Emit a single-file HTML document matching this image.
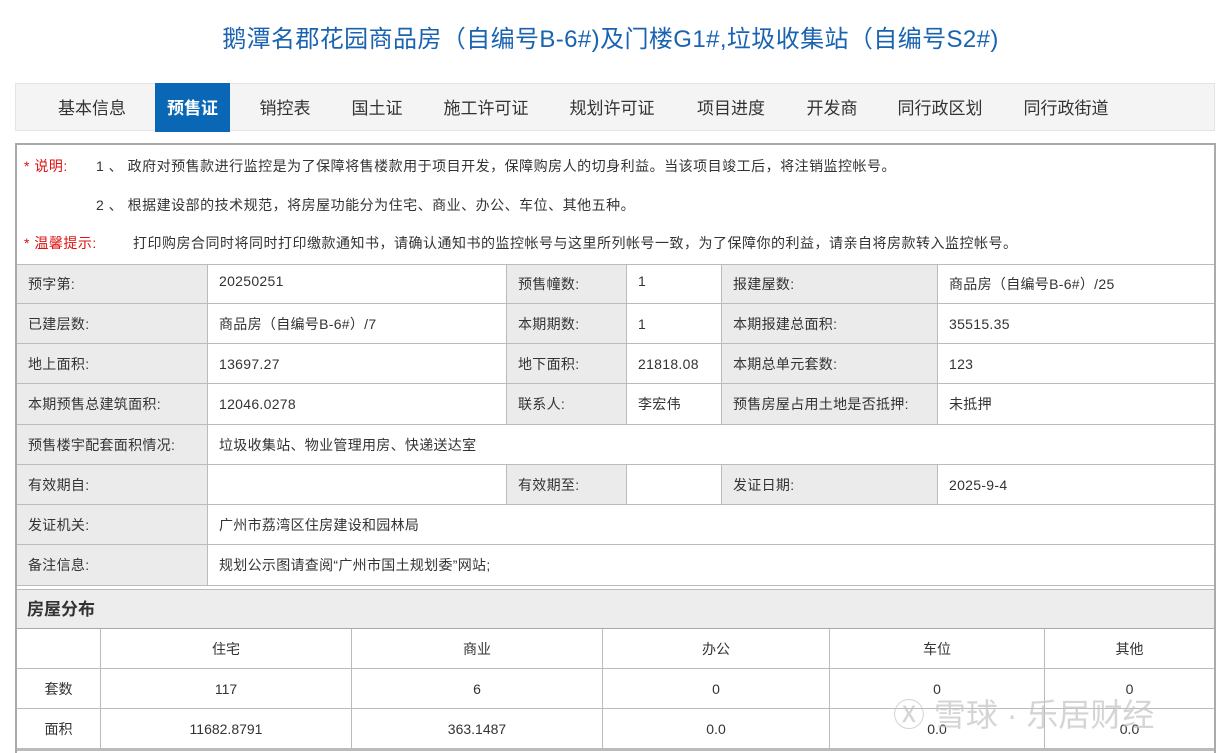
<!DOCTYPE html>
<html><head><meta charset="utf-8"><style>
body{margin:0;width:1221px;height:753px;background:#fff;font-family:"Liberation Sans","Noto Sans CJK SC",sans-serif;position:relative;overflow:hidden;color:#333}
.a{position:absolute;box-sizing:border-box}
.t{font-size:24px;color:#1a63b0;left:0;width:1221px;text-align:center;top:19px;letter-spacing:0.4px}
.nav{left:15px;top:83px;width:1200px;height:48px;background:#f4f4f4;border:1px solid #e4e4e4}
.tab{top:85px;height:48px;line-height:48px;font-size:17px;color:#333;transform:translateX(-50%);white-space:nowrap}
.act{left:155px;top:83px;width:75px;height:49px;background:#0a67b5;color:#fff;font-weight:bold;font-size:17px;text-align:center;line-height:51px}
.box{left:15px;top:143px;width:1201px;height:610px;border:2px solid #aaa;border-bottom:none}
.n{font-size:14px;color:#333;white-space:nowrap;letter-spacing:0.5px}
.r{color:#d11}
.c{font-size:14px;color:#333;padding-left:11px;display:flex;align-items:center;border-right:1px solid #bbb;border-bottom:1px solid #bbb;letter-spacing:0.3px}
.l{background:#ebebeb}
.h{font-size:14px;color:#333;display:flex;align-items:center;justify-content:center;border-right:1px solid #bbb;border-bottom:1px solid #bbb}
</style></head><body>
<div class="a t">鹅潭名郡花园商品房（自编号B-6#)及门楼G1#,垃圾收集站（自编号S2#)</div>
<div class="a nav"></div>
<div class="a tab" style="left:92px">基本信息</div>
<div class="a act">预售证</div>
<div class="a tab" style="left:285px">销控表</div>
<div class="a tab" style="left:377px">国土证</div>
<div class="a tab" style="left:486px">施工许可证</div>
<div class="a tab" style="left:612px">规划许可证</div>
<div class="a tab" style="left:731px">项目进度</div>
<div class="a tab" style="left:832px">开发商</div>
<div class="a tab" style="left:940px">同行政区划</div>
<div class="a tab" style="left:1066px">同行政街道</div>
<div class="a box"></div>
<div class="a n" style="left:24px;top:156px"><span class="r">* 说明:</span></div>
<div class="a n" style="left:96px;top:156px">1 、 政府对预售款进行监控是为了保障将售楼款用于项目开发，保障购房人的切身利益。当该项目竣工后，将注销监控帐号。</div>
<div class="a n" style="left:96px;top:195px">2 、 根据建设部的技术规范，将房屋功能分为住宅、商业、办公、车位、其他五种。</div>
<div class="a n" style="left:24px;top:233px"><span class="r">* 温馨提示:</span></div>
<div class="a n" style="left:133px;top:233px">打印购房合同时将同时打印缴款通知书，请确认通知书的监控帐号与这里所列帐号一致，为了保障你的利益，请亲自将房款转入监控帐号。</div>
<div class="a" style="left:17px;top:264px;width:1197px;border-top:1px solid #bbb"></div>

<div class="a c l" style="left:17px;top:265px;width:191px;height:39px">预字第:</div>
<div class="a c" style="left:208px;top:265px;width:299px;height:39px;align-items:flex-start;padding-top:8px">20250251</div>
<div class="a c l" style="left:507px;top:265px;width:120px;height:39px">预售幢数:</div>
<div class="a c" style="left:627px;top:265px;width:95px;height:39px;align-items:flex-start;padding-top:8px">1</div>
<div class="a c l" style="left:722px;top:265px;width:216px;height:39px">报建屋数:</div>
<div class="a c" style="left:938px;top:265px;width:276px;height:39px;border-right:none">商品房（自编号B-6#）/25</div>

<div class="a c l" style="left:17px;top:304px;width:191px;height:40px">已建层数:</div>
<div class="a c" style="left:208px;top:304px;width:299px;height:40px">商品房（自编号B-6#）/7</div>
<div class="a c l" style="left:507px;top:304px;width:120px;height:40px">本期期数:</div>
<div class="a c" style="left:627px;top:304px;width:95px;height:40px">1</div>
<div class="a c l" style="left:722px;top:304px;width:216px;height:40px">本期报建总面积:</div>
<div class="a c" style="left:938px;top:304px;width:276px;height:40px;border-right:none">35515.35</div>

<div class="a c l" style="left:17px;top:344px;width:191px;height:40px">地上面积:</div>
<div class="a c" style="left:208px;top:344px;width:299px;height:40px">13697.27</div>
<div class="a c l" style="left:507px;top:344px;width:120px;height:40px">地下面积:</div>
<div class="a c" style="left:627px;top:344px;width:95px;height:40px">21818.08</div>
<div class="a c l" style="left:722px;top:344px;width:216px;height:40px">本期总单元套数:</div>
<div class="a c" style="left:938px;top:344px;width:276px;height:40px;border-right:none">123</div>

<div class="a c l" style="left:17px;top:384px;width:191px;height:41px">本期预售总建筑面积:</div>
<div class="a c" style="left:208px;top:384px;width:299px;height:41px">12046.0278</div>
<div class="a c l" style="left:507px;top:384px;width:120px;height:41px">联系人:</div>
<div class="a c" style="left:627px;top:384px;width:95px;height:41px">李宏伟</div>
<div class="a c l" style="left:722px;top:384px;width:216px;height:41px">预售房屋占用土地是否抵押:</div>
<div class="a c" style="left:938px;top:384px;width:276px;height:41px;border-right:none">未抵押</div>

<div class="a c l" style="left:17px;top:425px;width:191px;height:40px">预售楼宇配套面积情况:</div>
<div class="a c" style="left:208px;top:425px;width:1006px;height:40px;border-right:none">垃圾收集站、物业管理用房、快递送达室</div>

<div class="a c l" style="left:17px;top:465px;width:191px;height:40px">有效期自:</div>
<div class="a c" style="left:208px;top:465px;width:299px;height:40px"></div>
<div class="a c l" style="left:507px;top:465px;width:120px;height:40px">有效期至:</div>
<div class="a c" style="left:627px;top:465px;width:95px;height:40px"></div>
<div class="a c l" style="left:722px;top:465px;width:216px;height:40px">发证日期:</div>
<div class="a c" style="left:938px;top:465px;width:276px;height:40px;border-right:none">2025-9-4</div>

<div class="a c l" style="left:17px;top:505px;width:191px;height:40px">发证机关:</div>
<div class="a c" style="left:208px;top:505px;width:1006px;height:40px;border-right:none">广州市荔湾区住房建设和园林局</div>

<div class="a c l" style="left:17px;top:545px;width:191px;height:41px">备注信息:</div>
<div class="a c" style="left:208px;top:545px;width:1006px;height:41px;border-right:none">规划公示图请查阅“广州市国土规划委”网站;</div>

<div class="a" style="left:17px;top:586px;width:1197px;height:4px;background:#fff;border-bottom:1px solid #bbb"></div>
<div class="a" style="left:17px;top:590px;width:1197px;height:39px;background:#ededed;border-bottom:1px solid #aaa;font-size:17px;font-weight:bold;padding-left:10px;line-height:40px;color:#333">房屋分布</div>

<div class="a h" style="left:17px;top:629px;width:84px;height:40px"></div>
<div class="a h" style="left:101px;top:629px;width:251px;height:40px">住宅</div>
<div class="a h" style="left:352px;top:629px;width:251px;height:40px">商业</div>
<div class="a h" style="left:603px;top:629px;width:227px;height:40px">办公</div>
<div class="a h" style="left:830px;top:629px;width:215px;height:40px">车位</div>
<div class="a h" style="left:1045px;top:629px;width:169px;height:40px;border-right:none">其他</div>

<div class="a h" style="left:17px;top:669px;width:84px;height:40px">套数</div>
<div class="a h" style="left:101px;top:669px;width:251px;height:40px">117</div>
<div class="a h" style="left:352px;top:669px;width:251px;height:40px">6</div>
<div class="a h" style="left:603px;top:669px;width:227px;height:40px">0</div>
<div class="a h" style="left:830px;top:669px;width:215px;height:40px">0</div>
<div class="a h" style="left:1045px;top:669px;width:169px;height:40px;border-right:none">0</div>

<div class="a h" style="left:17px;top:709px;width:84px;height:40px">面积</div>
<div class="a h" style="left:101px;top:709px;width:251px;height:40px">11682.8791</div>
<div class="a h" style="left:352px;top:709px;width:251px;height:40px">363.1487</div>
<div class="a h" style="left:603px;top:709px;width:227px;height:40px">0.0</div>
<div class="a h" style="left:830px;top:709px;width:215px;height:40px">0.0</div>
<div class="a h" style="left:1045px;top:709px;width:169px;height:40px;border-right:none">0.0</div>
<div class="a" style="left:17px;top:749px;width:1197px;border-top:2px solid #bbb"></div>

<div class="a" style="left:893px;top:690px;font-size:32px;color:rgba(195,195,195,0.7);white-space:nowrap">Ⓧ 雪球 · 乐居财经</div>
</body></html>
